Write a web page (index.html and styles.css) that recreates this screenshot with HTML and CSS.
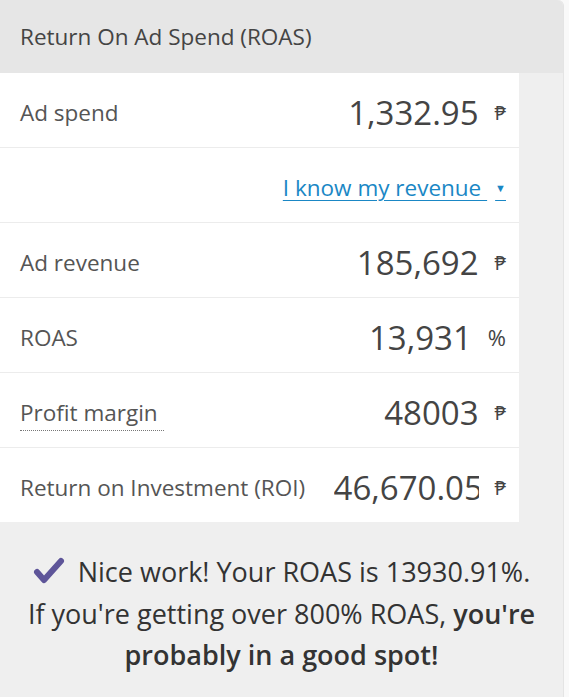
FILE: index.html
```html
<!DOCTYPE html>
<html>
<head>
<meta charset="utf-8">
<link rel="stylesheet" href="styles.css">
</head>
<body>
<div class="card">
  <div class="card-header">Return On Ad Spend (ROAS)</div>
  <div class="table">
    <div class="row">
      <span class="label">Ad spend</span>
      <span class="value">1,332.95</span>
      <span class="unit">₱</span>
    </div>
    <div class="row row-link">
      <a class="toggle" href="#">I know my revenue <span class="caret">▼</span></a>
    </div>
    <div class="row">
      <span class="label">Ad revenue</span>
      <span class="value">185,692</span>
      <span class="unit">₱</span>
    </div>
    <div class="row">
      <span class="label">ROAS</span>
      <span class="value">13,931</span>
      <span class="unit unit-pct">%</span>
    </div>
    <div class="row">
      <span class="label"><abbr class="hint">Profit margin</abbr></span>
      <span class="value">48003</span>
      <span class="unit">₱</span>
    </div>
    <div class="row row-last">
      <span class="label">Return on Investment (ROI)</span>
      <span class="value value-clip">46,670.05</span>
      <span class="unit">₱</span>
    </div>
  </div>
  <div class="result">
    <p><svg class="check" width="32" height="28" viewBox="0 0 32 28"><path d="M4 15 L11 23 L28 4" fill="none" stroke="#5e5599" stroke-width="6" stroke-linecap="round" stroke-linejoin="round"/></svg> Nice work! Your ROAS is 13930.91%. If you're getting over 800% ROAS, <strong>you're probably in a good spot!</strong></p>
  </div>
</div>
</body>
</html>
```
FILE: styles.css
```css
html, body {
  margin: 0;
  padding: 0;
  background: #f9f9f9;
}
body {
  font-family: "Open Sans", "Noto Sans", sans-serif;
  color: #444;
}
.card {
  width: 564px;
  height: 697px;
  background: #efefef;
  border-top-right-radius: 6px;
  border-right: 1px solid #e4e4e4;
  box-sizing: border-box;
}
.card-header {
  height: 73px;
  background: #e6e6e6;
  border-top-right-radius: 6px;
  display: flex;
  align-items: center;
  padding-left: 20px;
  font-size: 22.5px;
  color: #444;
}
.table {
  width: 519px;
  background: #fff;
}
.row {
  height: 75px;
  box-sizing: border-box;
  display: flex;
  align-items: center;
  padding: 4px 13px 0 20px;
  border-bottom: 1px solid #ececec;
}
.row-last {
  height: 74px;
  border-bottom: none;
}
.label {
  flex: 1;
  font-size: 22.5px;
  color: #555;
  white-space: nowrap;
}
.hint {
  text-decoration: none;
  border-bottom: 1px dotted #777;
  padding-right: 6px;
  padding-bottom: 2px;
}
.value {
  width: 148px;
  flex: none;
  font-size: 33px;
  color: #444;
  text-align: right;
  white-space: nowrap;
  overflow: hidden;
}
.value-clip {
  width: 145px;
  text-align: left;
  margin-left: 3px;
}
.unit {
  margin-left: 16px;
  font-size: 20px;
  color: #444;
}
.unit-pct {
  font-size: 22px;
}
.row-link {
  justify-content: flex-end;
}
.toggle {
  color: #1a87c5;
  font-size: 22.5px;
  text-decoration: underline;
  text-decoration-thickness: 1px;
  text-underline-offset: 4px;
}
.caret {
  font-size: 11px;
  margin-left: 8px;
  vertical-align: 4px;
}
.result {
  padding: 29px 23px 0;
  text-align: center;
}
.result p {
  margin: 0;
  font-size: 27px;
  line-height: 41.5px;
  color: #333;
}
.result strong {
  font-weight: 600;
}
.check {
  vertical-align: -3px;
  margin-right: 6px;
}
```
